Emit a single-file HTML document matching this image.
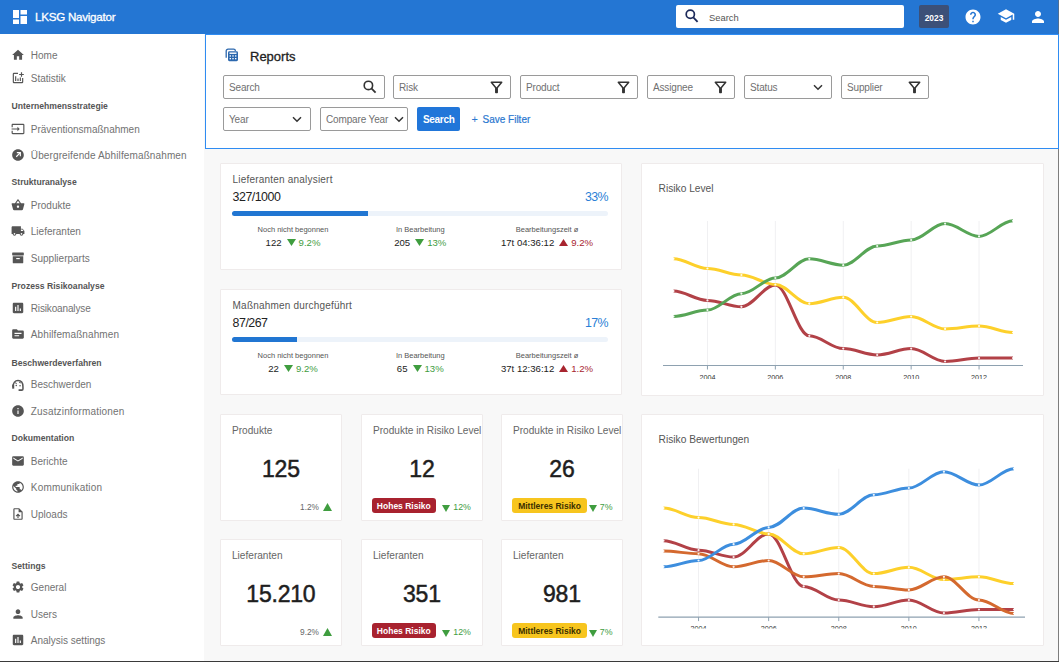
<!DOCTYPE html>
<html><head><meta charset="utf-8"><title>LKSG Navigator - Reports</title>
<style>
html,body{margin:0;padding:0;width:1059px;height:662px;overflow:hidden;background:#f8f8f8}
body{position:relative;font-family:"Liberation Sans", sans-serif}
.t{position:absolute;white-space:nowrap;line-height:1}
</style></head><body>
<div style="position:absolute;left:0px;top:0px;width:1059px;height:662px;background:#f8f8f8"></div><div style="position:absolute;left:0px;top:34px;width:204px;height:628px;background:#ffffff"></div><div style="position:absolute;left:0px;top:0px;width:1059px;height:34px;background:#2476d3"></div><div style="position:absolute;left:1058px;top:149px;width:1px;height:513px;background:#7d7d7d"></div><div style="position:absolute;left:1058px;top:0px;width:1px;height:34px;background:#4f6f94"></div><div style="position:absolute;left:0px;top:661px;width:1059px;height:1px;background:#3a3a3a"></div><svg style="position:absolute;left:13px;top:10px" width="14" height="14" viewBox="0 0 14 14"><rect x="0" y="0" width="6" height="8" fill="#fff"/><rect x="7.5" y="0" width="6.5" height="4.5" fill="#fff"/><rect x="0" y="9.5" width="6" height="4.5" fill="#fff"/><rect x="7.5" y="6" width="6.5" height="8" fill="#fff"/></svg><div class="t" style="left:35px;top:11.18px;font-size:11.6px;color:#ffffff;font-weight:400;letter-spacing:-0.25px;-webkit-text-stroke:0.3px #fff">LKSG Navigator</div><div style="position:absolute;left:676px;top:5px;width:228px;height:23px;background:#fff;border-radius:2px"></div><svg style="position:absolute;left:685px;top:9px" width="14" height="14" viewBox="0 0 14 14"><circle cx="5.3" cy="5.3" r="4.1" fill="none" stroke="#1c2a5a" stroke-width="1.7"/><line x1="8.3" y1="8.3" x2="12.6" y2="12.8" stroke="#1c2a5a" stroke-width="1.8"/></svg><div class="t" style="left:709px;top:12.64px;font-size:9.4px;color:#555;font-weight:400;">Search</div><div style="position:absolute;left:919px;top:5px;width:30px;height:23px;background:#3c5078;border-radius:2px"></div><div class="t" style="left:784px;width:300px;text-align:center;top:14.09px;font-size:8.4px;color:#ffffff;font-weight:700;">2023</div><svg style="position:absolute;left:964px;top:7.8px" width="18" height="18" viewBox="0 0 24 24"><path fill="#fff" d="M12 2C6.48 2 2 6.48 2 12s4.48 10 10 10 10-4.48 10-10S17.52 2 12 2zm1 17h-2v-2h2v2zm2.07-7.75l-.9.92C13.45 12.9 13 13.5 13 15h-2v-.5c0-1.1.45-2.1 1.17-2.83l1.24-1.26c.37-.36.59-.86.59-1.41 0-1.1-.9-2-2-2s-2 .9-2 2H8c0-2.21 1.79-4 4-4s4 1.79 4 4c0 .88-.36 1.68-.93 2.25z"/></svg><svg style="position:absolute;left:996.5px;top:7px" width="18" height="18" viewBox="0 0 24 24"><path fill="#fff" d="M5 13.18v4L12 21l7-3.82v-4L12 17l-7-3.82zM12 3L1 9l11 6 9-4.91V17h2V9L12 3z"/></svg><svg style="position:absolute;left:1029px;top:8px" width="18" height="18" viewBox="0 0 24 24"><path fill="#fff" d="M12 12c2.21 0 4-1.79 4-4s-1.79-4-4-4-4 1.79-4 4 1.79 4 4 4zm0 2c-2.67 0-8 1.34-8 4v2h16v-2c0-2.66-5.33-4-8-4z"/></svg><div class="t" style="left:30.8px;top:51.03px;font-size:10px;color:#727272;font-weight:400;">Home</div><svg style="position:absolute;left:10.7px;top:48.0px" width="14" height="14" viewBox="0 0 24 24" fill="#555"><path d="M10 20v-6h4v6h5v-8h3L12 3 2 12h3v8z"/></svg><div class="t" style="left:30.8px;top:74.03px;font-size:10px;color:#727272;font-weight:400;">Statistik</div><svg style="position:absolute;left:10.7px;top:71.0px" width="14" height="14" viewBox="0 0 24 24" fill="#555"><path d="M19 19H5V5h7V3H5a2 2 0 00-2 2v14a2 2 0 002 2h14a2 2 0 002-2v-7h-2v7z" /><path d="M19 2h-2v3h-3v2h3v3h2V7h3V5h-3z"/><path d="M7 9h2v8H7zM11 13h2v4h-2zM15 11h2v6h-2z" transform="translate(0,0)"/></svg><div class="t" style="left:11.5px;top:102.48px;font-size:8.65px;color:#555;font-weight:700;">Unternehmensstrategie</div><div class="t" style="left:30.8px;top:124.53px;font-size:10px;color:#727272;font-weight:400;">Präventionsmaßnahmen</div><svg style="position:absolute;left:10.7px;top:121.5px" width="14" height="14" viewBox="0 0 24 24" fill="#555"><path d="M21 3.01H3c-1.1 0-2 .9-2 2V9h2V4.99h18v14.03H3V15H1v4.01c0 1.1.9 1.98 2 1.98h18c1.1 0 2-.88 2-1.98v-14a2 2 0 00-2-2zM11 16l4-4-4-4v3H1v2h10v3z"/></svg><div class="t" style="left:30.8px;top:151.03px;font-size:10px;color:#727272;font-weight:400;letter-spacing:0.12px">Übergreifende Abhilfemaßnahmen</div><svg style="position:absolute;left:10.7px;top:148.0px" width="14" height="14" viewBox="0 0 24 24" fill="#555"><path d="M12 2C6.48 2 2 6.48 2 12s4.48 10 10 10 10-4.48 10-10S17.52 2 12 2zm2.5 5H17v7h-2v-3.6l-5.3 5.3-1.4-1.4L13.6 9H10V7z"/></svg><div class="t" style="left:11.5px;top:178.48px;font-size:8.65px;color:#555;font-weight:700;">Strukturanalyse</div><div class="t" style="left:30.8px;top:201.23px;font-size:10px;color:#727272;font-weight:400;">Produkte</div><svg style="position:absolute;left:10.7px;top:198.2px" width="14" height="14" viewBox="0 0 24 24" fill="#555"><path d="M17.21 9l-4.38-6.56a.993.993 0 00-.83-.42c-.32 0-.64.14-.83.43L6.79 9H2c-.55 0-1 .45-1 1 0 .09.01.18.04.27l2.54 9.27c.23.84 1 1.46 1.92 1.46h13c.92 0 1.69-.62 1.93-1.46l2.54-9.27L23 10c0-.55-.45-1-1-1h-4.79zM9 9l3-4.4L15 9H9zm3 8c-1.1 0-2-.9-2-2s.9-2 2-2 2 .9 2 2-.9 2-2 2z"/></svg><div class="t" style="left:30.8px;top:227.34px;font-size:10px;color:#727272;font-weight:400;">Lieferanten</div><svg style="position:absolute;left:10.7px;top:224.3px" width="14" height="14" viewBox="0 0 24 24" fill="#555"><path d="M20 8h-3V4H3c-1.1 0-2 .9-2 2v11h2c0 1.66 1.34 3 3 3s3-1.34 3-3h6c0 1.66 1.34 3 3 3s3-1.34 3-3h2v-5l-3-4zM6 18.5c-.83 0-1.5-.67-1.5-1.5s.67-1.5 1.5-1.5 1.5.67 1.5 1.5-.67 1.5-1.5 1.5zm13.5-9l1.96 2.5H17V9.5h2.5zm-1.5 9c-.83 0-1.5-.67-1.5-1.5s.67-1.5 1.5-1.5 1.5.67 1.5 1.5-.67 1.5-1.5 1.5z"/></svg><div class="t" style="left:30.8px;top:253.53px;font-size:10px;color:#727272;font-weight:400;">Supplierparts</div><svg style="position:absolute;left:10.7px;top:250.5px" width="14" height="14" viewBox="0 0 24 24" fill="#555"><rect x="2" y="2.5" width="20" height="5" rx="1"/><path d="M3 9h18v10.5a1.5 1.5 0 0 1-1.5 1.5h-15A1.5 1.5 0 0 1 3 19.5z"/><rect x="9" y="12" width="6" height="2" fill="#fff"/></svg><div class="t" style="left:11.5px;top:281.78px;font-size:8.65px;color:#555;font-weight:700;">Prozess Risikoanalyse</div><div class="t" style="left:30.8px;top:304.24px;font-size:10px;color:#727272;font-weight:400;letter-spacing:-0.15px">Risikoanalyse</div><svg style="position:absolute;left:10.7px;top:301.2px" width="14" height="14" viewBox="0 0 24 24" fill="#555"><path d="M19 3H5c-1.1 0-2 .9-2 2v14c0 1.1.9 2 2 2h14c1.1 0 2-.9 2-2V5c0-1.1-.9-2-2-2zM9 17H7v-7h2v7zm4 0h-2V7h2v10zm4 0h-2v-4h2v4z"/></svg><div class="t" style="left:30.8px;top:330.14px;font-size:10px;color:#727272;font-weight:400;letter-spacing:0.1px">Abhilfemaßnahmen</div><svg style="position:absolute;left:10.7px;top:327.1px" width="14" height="14" viewBox="0 0 24 24" fill="#555"><path d="M20 6h-8l-2-2H4c-1.1 0-1.99.9-1.99 2L2 18c0 1.1.9 2 2 2h16c1.1 0 2-.9 2-2V8c0-1.1-.9-2-2-2zm-2 6H6v-2h12v2zm-4 4H6v-2h8v2z"/></svg><div class="t" style="left:11.5px;top:358.58px;font-size:8.65px;color:#555;font-weight:700;">Beschwerdeverfahren</div><div class="t" style="left:30.8px;top:380.24px;font-size:10px;color:#727272;font-weight:400;">Beschwerden</div><svg style="position:absolute;left:10.7px;top:377.2px" width="14" height="14" viewBox="0 0 24 24" fill="#555"><path fill="none" stroke="#555" stroke-width="2.6" d="M3.5 17C3.5 10 7 5.8 12 5.8S20.5 10 20.5 16.5v4a2 2 0 0 1-2 2H13"/><rect x="2" y="13" width="3.5" height="7" fill="#555"/><circle cx="9" cy="14.5" r="1.3" fill="#555"/><circle cx="15.5" cy="15" r="1.3" fill="#555"/><path fill="none" stroke="#555" stroke-width="1.8" d="M7.5 9.5l2 2.5M14 8.5l2.5 2"/></svg><div class="t" style="left:30.8px;top:406.64px;font-size:10px;color:#727272;font-weight:400;letter-spacing:0.16px">Zusatzinformationen</div><svg style="position:absolute;left:10.7px;top:403.6px" width="14" height="14" viewBox="0 0 24 24" fill="#555"><path d="M12 2C6.48 2 2 6.48 2 12s4.48 10 10 10 10-4.48 10-10S17.52 2 12 2zm1 15h-2v-6h2v6zm0-8h-2V7h2v2z"/></svg><div class="t" style="left:11.5px;top:434.48px;font-size:8.65px;color:#555;font-weight:700;">Dokumentation</div><div class="t" style="left:30.8px;top:457.14px;font-size:10px;color:#727272;font-weight:400;">Berichte</div><svg style="position:absolute;left:10.7px;top:454.1px" width="14" height="14" viewBox="0 0 24 24" fill="#555"><path d="M20 4H4c-1.1 0-1.99.9-1.99 2L2 18c0 1.1.9 2 2 2h16c1.1 0 2-.9 2-2V6c0-1.1-.9-2-2-2zm0 4l-8 5-8-5V6l8 5 8-5v2z"/></svg><div class="t" style="left:30.8px;top:483.24px;font-size:10px;color:#727272;font-weight:400;letter-spacing:0.2px">Kommunikation</div><svg style="position:absolute;left:10.7px;top:480.2px" width="14" height="14" viewBox="0 0 24 24" fill="#555"><path d="M12 2C6.48 2 2 6.48 2 12s4.48 10 10 10 10-4.48 10-10S17.52 2 12 2zm-1 17.93c-3.95-.49-7-3.85-7-7.93 0-.62.08-1.21.21-1.79L9 15v1c0 1.1.9 2 2 2v1.93zm6.9-2.54c-.26-.81-1-1.39-1.9-1.39h-1v-3c0-.55-.45-1-1-1H8v-2h2c.55 0 1-.45 1-1V7h2c1.1 0 2-.9 2-2v-.41c2.93 1.19 5 4.06 5 7.41 0 2.08-.8 3.97-2.1 5.39z"/></svg><div class="t" style="left:30.8px;top:509.74px;font-size:10px;color:#727272;font-weight:400;">Uploads</div><svg style="position:absolute;left:10.7px;top:506.7px" width="14" height="14" viewBox="0 0 24 24" fill="#555"><path d="M14 2H6c-1.1 0-1.99.9-1.99 2L4 20c0 1.1.89 2 1.99 2H18c1.1 0 2-.9 2-2V8l-6-6zm4 18H6V4h7v5h5v11zM8 15.01l1.41 1.41L11 14.84V19h2v-4.16l1.59 1.59L16 15.01 12.01 11z"/></svg><div class="t" style="left:11.5px;top:561.68px;font-size:8.65px;color:#555;font-weight:700;">Settings</div><div class="t" style="left:30.8px;top:583.13px;font-size:10px;color:#727272;font-weight:400;">General</div><svg style="position:absolute;left:10.7px;top:580.1px" width="14" height="14" viewBox="0 0 24 24" fill="#555"><path d="M19.14 12.94c.04-.3.06-.61.06-.94 0-.32-.02-.64-.07-.94l2.03-1.58a.49.49 0 00.12-.61l-1.92-3.32a.488.488 0 00-.59-.22l-2.39.96c-.5-.38-1.03-.7-1.62-.94l-.36-2.54a.484.484 0 00-.48-.41h-3.84c-.24 0-.43.17-.47.41l-.36 2.54c-.59.24-1.13.57-1.62.94l-2.39-.96c-.22-.08-.47 0-.59.22L2.74 8.87c-.12.21-.08.47.12.61l2.03 1.58c-.05.3-.09.63-.09.94s.02.64.07.94l-2.03 1.58a.49.49 0 00-.12.61l1.92 3.32c.12.22.37.29.59.22l2.39-.96c.5.38 1.03.7 1.62.94l.36 2.54c.05.24.24.41.48.41h3.84c.24 0 .44-.17.47-.41l.36-2.54c.59-.24 1.13-.56 1.62-.94l2.39.96c.22.08.47 0 .59-.22l1.92-3.32c.12-.22.07-.47-.12-.61l-2.01-1.58zM12 15.6c-1.98 0-3.6-1.62-3.6-3.6s1.62-3.6 3.6-3.6 3.6 1.62 3.6 3.6-1.62 3.6-3.6 3.6z"/></svg><div class="t" style="left:30.8px;top:609.83px;font-size:10px;color:#727272;font-weight:400;">Users</div><svg style="position:absolute;left:10.7px;top:606.8px" width="14" height="14" viewBox="0 0 24 24" fill="#555"><path d="M12 12c2.21 0 4-1.79 4-4s-1.79-4-4-4-4 1.79-4 4 1.79 4 4 4zm0 2c-2.67 0-8 1.34-8 4v2h16v-2c0-2.66-5.33-4-8-4z"/></svg><div class="t" style="left:30.8px;top:636.24px;font-size:10px;color:#727272;font-weight:400;">Analysis settings</div><svg style="position:absolute;left:10.7px;top:633.2px" width="14" height="14" viewBox="0 0 24 24" fill="#555"><path d="M19 3H5c-1.1 0-2 .9-2 2v14c0 1.1.9 2 2 2h14c1.1 0 2-.9 2-2V5c0-1.1-.9-2-2-2zM9 17H7v-7h2v7zm4 0h-2V7h2v10zm4 0h-2v-4h2v4z"/></svg><div style="position:absolute;left:205px;top:34px;width:853px;height:114px;box-sizing:border-box;border:1px solid #2f8cf2;background:#fff;width:854px;height:115px"></div><svg style="position:absolute;left:225px;top:48px" width="14" height="14" viewBox="0 0 14 14"><path d="M1.2 9.8V3A1.8 1.8 0 0 1 3 1.2h5.6A1.8 1.8 0 0 1 10.4 3" fill="none" stroke="#2c68ae" stroke-width="1.3"/><rect x="3" y="3.2" width="10" height="10" rx="1.4" fill="#2c68ae"/><rect x="4.5" y="4.5" width="7" height="1.4" fill="#fff"/><rect x="4.6" y="7.3" width="1.4" height="1.3" fill="#fff"/><rect x="7.3" y="7.3" width="1.4" height="1.3" fill="#fff"/><rect x="10" y="7.3" width="1.4" height="1.3" fill="#fff"/><rect x="4.6" y="10" width="1.4" height="1.3" fill="#fff"/><rect x="7.3" y="10" width="1.4" height="1.3" fill="#fff"/><rect x="10" y="10" width="1.4" height="1.3" fill="#fff"/></svg><div class="t" style="left:250px;top:49.60px;font-size:13px;color:#222;font-weight:400;-webkit-text-stroke:0.3px #222">Reports</div><div style="position:absolute;left:223px;top:75px;width:162px;height:24px;box-sizing:border-box;border:1px solid #9a9a9a;border-radius:2px;background:#fff"></div><div class="t" style="left:229px;top:82.63px;font-size:10px;color:#707070;font-weight:400;letter-spacing:-0.15px">Search</div><svg style="position:absolute;left:363px;top:80px" width="14" height="14" viewBox="0 0 14 14"><circle cx="5.4" cy="5.4" r="4.2" fill="none" stroke="#333" stroke-width="1.6"/><line x1="8.4" y1="8.4" x2="12.6" y2="12.6" stroke="#333" stroke-width="1.8"/></svg><div style="position:absolute;left:393px;top:75px;width:118px;height:24px;box-sizing:border-box;border:1px solid #9a9a9a;border-radius:2px;background:#fff"></div><div class="t" style="left:399px;top:82.63px;font-size:10px;color:#707070;font-weight:400;letter-spacing:-0.15px">Risk</div><svg style="position:absolute;left:489.5px;top:80.5px" width="13" height="13" viewBox="0 0 13 13"><path d="M1.3 1.3h10.4L7.2 6.8v4.6H5.8V6.8z" fill="none" stroke="#333" stroke-width="1.5" stroke-linejoin="round"/></svg><div style="position:absolute;left:520px;top:75px;width:118px;height:24px;box-sizing:border-box;border:1px solid #9a9a9a;border-radius:2px;background:#fff"></div><div class="t" style="left:526px;top:82.63px;font-size:10px;color:#707070;font-weight:400;letter-spacing:-0.15px">Product</div><svg style="position:absolute;left:616.5px;top:80.5px" width="13" height="13" viewBox="0 0 13 13"><path d="M1.3 1.3h10.4L7.2 6.8v4.6H5.8V6.8z" fill="none" stroke="#333" stroke-width="1.5" stroke-linejoin="round"/></svg><div style="position:absolute;left:647px;top:75px;width:88px;height:24px;box-sizing:border-box;border:1px solid #9a9a9a;border-radius:2px;background:#fff"></div><div class="t" style="left:653px;top:82.63px;font-size:10px;color:#707070;font-weight:400;letter-spacing:-0.15px">Assignee</div><svg style="position:absolute;left:713.5px;top:80.5px" width="13" height="13" viewBox="0 0 13 13"><path d="M1.3 1.3h10.4L7.2 6.8v4.6H5.8V6.8z" fill="none" stroke="#333" stroke-width="1.5" stroke-linejoin="round"/></svg><div style="position:absolute;left:744px;top:75px;width:88px;height:24px;box-sizing:border-box;border:1px solid #9a9a9a;border-radius:2px;background:#fff"></div><div class="t" style="left:750px;top:82.63px;font-size:10px;color:#707070;font-weight:400;letter-spacing:-0.15px">Status</div><svg style="position:absolute;left:813px;top:83.5px" width="10" height="7" viewBox="0 0 10 7"><path d="M1 1.2l4 4 4-4" fill="none" stroke="#333" stroke-width="1.5"/></svg><div style="position:absolute;left:841px;top:75px;width:88px;height:24px;box-sizing:border-box;border:1px solid #9a9a9a;border-radius:2px;background:#fff"></div><div class="t" style="left:847px;top:82.63px;font-size:10px;color:#707070;font-weight:400;letter-spacing:-0.15px">Supplier</div><svg style="position:absolute;left:907.5px;top:80.5px" width="13" height="13" viewBox="0 0 13 13"><path d="M1.3 1.3h10.4L7.2 6.8v4.6H5.8V6.8z" fill="none" stroke="#333" stroke-width="1.5" stroke-linejoin="round"/></svg><div style="position:absolute;left:223px;top:107px;width:88px;height:24px;box-sizing:border-box;border:1px solid #9a9a9a;border-radius:2px;background:#fff"></div><div class="t" style="left:229px;top:114.63px;font-size:10px;color:#707070;font-weight:400;letter-spacing:-0.15px">Year</div><svg style="position:absolute;left:292px;top:115.5px" width="10" height="7" viewBox="0 0 10 7"><path d="M1 1.2l4 4 4-4" fill="none" stroke="#333" stroke-width="1.5"/></svg><div style="position:absolute;left:320px;top:107px;width:88px;height:24px;box-sizing:border-box;border:1px solid #9a9a9a;border-radius:2px;background:#fff"></div><div class="t" style="left:326px;top:114.63px;font-size:10px;color:#707070;font-weight:400;letter-spacing:-0.15px">Compare Year</div><svg style="position:absolute;left:393.8px;top:115.5px" width="10" height="7" viewBox="0 0 10 7"><path d="M1 1.2l4 4 4-4" fill="none" stroke="#333" stroke-width="1.5"/></svg><div style="position:absolute;left:417px;top:107px;width:43px;height:24px;background:#2176d9;border-radius:2px"></div><div class="t" style="left:288.7px;width:300px;text-align:center;top:115.44px;font-size:10px;color:#fff;font-weight:700;letter-spacing:-0.3px">Search</div><div class="t" style="left:471.5px;top:114.29px;font-size:11px;color:#2b78d0;font-weight:400;">+</div><div class="t" style="left:482.5px;top:115.13px;font-size:10px;color:#2b78d0;font-weight:400;-webkit-text-stroke:0.2px #2b78d0">Save Filter</div><div style="position:absolute;left:220px;top:163px;width:402px;height:107px;background:#fff;box-sizing:border-box;border:1px solid #efebeb;border-radius:1px"></div><div style="position:absolute;left:220px;top:289px;width:402px;height:106px;background:#fff;box-sizing:border-box;border:1px solid #efebeb;border-radius:1px"></div><div style="position:absolute;left:220px;top:414px;width:121.5px;height:106.5px;background:#fff;box-sizing:border-box;border:1px solid #efebeb;border-radius:1px"></div><div style="position:absolute;left:361px;top:414px;width:121.5px;height:106.5px;background:#fff;box-sizing:border-box;border:1px solid #efebeb;border-radius:1px"></div><div style="position:absolute;left:501px;top:414px;width:121.5px;height:106.5px;background:#fff;box-sizing:border-box;border:1px solid #efebeb;border-radius:1px"></div><div style="position:absolute;left:220px;top:539px;width:121.5px;height:106.5px;background:#fff;box-sizing:border-box;border:1px solid #efebeb;border-radius:1px"></div><div style="position:absolute;left:361px;top:539px;width:121.5px;height:106.5px;background:#fff;box-sizing:border-box;border:1px solid #efebeb;border-radius:1px"></div><div style="position:absolute;left:501px;top:539px;width:121.5px;height:106.5px;background:#fff;box-sizing:border-box;border:1px solid #efebeb;border-radius:1px"></div><div style="position:absolute;left:641px;top:163px;width:402.8px;height:233px;background:#fff;box-sizing:border-box;border:1px solid #efebeb;border-radius:1px"></div><div style="position:absolute;left:641px;top:414.3px;width:402.8px;height:232px;background:#fff;box-sizing:border-box;border:1px solid #efebeb;border-radius:1px"></div><div class="t" style="left:232.6px;top:175.13px;font-size:10px;color:#555;font-weight:400;letter-spacing:0.2px">Lieferanten analysiert</div><div class="t" style="left:232.6px;top:191.10px;font-size:12.4px;color:#222;font-weight:400;letter-spacing:-0.5px">327/1000</div><div class="t" style="left:308px;width:300px;text-align:right;top:191.10px;font-size:12.4px;color:#2a7fd6;font-weight:400;letter-spacing:-0.6px">33%</div><div style="position:absolute;left:232px;top:211px;width:375.5px;height:5px;background:#edf3fa;border-radius:3px"></div><div style="position:absolute;left:232px;top:211px;width:135.5px;height:5px;background:#2176d2;border-radius:3px 0 0 3px"></div><div class="t" style="left:143px;width:300px;text-align:center;top:225.85px;font-size:7.5px;color:#555;font-weight:400;">Noch nicht begonnen</div><div class="t" style="left:143px;width:300px;text-align:center;top:238.07px;font-size:9.6px;color:#222;font-weight:400;"><span style="color:#222">122</span><svg width="9" height="7" viewBox="0 0 9 7" style="vertical-align:0px;margin:0 3px 0 5px"><path d="M0 0h9L4.5 7z" fill="#3f9d3f"/></svg><span style="color:#3f9d3f">9.2%</span></div><div class="t" style="left:270.3px;width:300px;text-align:center;top:225.85px;font-size:7.5px;color:#555;font-weight:400;">In Bearbeitung</div><div class="t" style="left:270.3px;width:300px;text-align:center;top:238.07px;font-size:9.6px;color:#222;font-weight:400;"><span style="color:#222">205</span><svg width="9" height="7" viewBox="0 0 9 7" style="vertical-align:0px;margin:0 3px 0 5px"><path d="M0 0h9L4.5 7z" fill="#3f9d3f"/></svg><span style="color:#3f9d3f">13%</span></div><div class="t" style="left:397px;width:300px;text-align:center;top:225.85px;font-size:7.5px;color:#555;font-weight:400;">Bearbeitungszeit ø</div><div class="t" style="left:397px;width:300px;text-align:center;top:238.07px;font-size:9.6px;color:#222;font-weight:400;"><span style="color:#222">17t 04:36:12</span><svg width="9" height="7" viewBox="0 0 9 7" style="vertical-align:0px;margin:0 3px 0 5px"><path d="M0 7h9L4.5 0z" fill="#a8252f"/></svg><span style="color:#a8252f">9.2%</span></div><div class="t" style="left:232.6px;top:301.14px;font-size:10px;color:#555;font-weight:400;letter-spacing:0.2px">Maßnahmen durchgeführt</div><div class="t" style="left:232.6px;top:317.10px;font-size:12.4px;color:#222;font-weight:400;letter-spacing:-0.5px">87/267</div><div class="t" style="left:308px;width:300px;text-align:right;top:317.10px;font-size:12.4px;color:#2a7fd6;font-weight:400;letter-spacing:-0.6px">17%</div><div style="position:absolute;left:232px;top:337px;width:375.5px;height:5px;background:#edf3fa;border-radius:3px"></div><div style="position:absolute;left:232px;top:337px;width:64.5px;height:5px;background:#2176d2;border-radius:3px 0 0 3px"></div><div class="t" style="left:143px;width:300px;text-align:center;top:351.85px;font-size:7.5px;color:#555;font-weight:400;">Noch nicht begonnen</div><div class="t" style="left:143px;width:300px;text-align:center;top:364.07px;font-size:9.6px;color:#222;font-weight:400;"><span style="color:#222">22</span><svg width="9" height="7" viewBox="0 0 9 7" style="vertical-align:0px;margin:0 3px 0 5px"><path d="M0 0h9L4.5 7z" fill="#3f9d3f"/></svg><span style="color:#3f9d3f">9.2%</span></div><div class="t" style="left:270.3px;width:300px;text-align:center;top:351.85px;font-size:7.5px;color:#555;font-weight:400;">In Bearbeitung</div><div class="t" style="left:270.3px;width:300px;text-align:center;top:364.07px;font-size:9.6px;color:#222;font-weight:400;"><span style="color:#222">65</span><svg width="9" height="7" viewBox="0 0 9 7" style="vertical-align:0px;margin:0 3px 0 5px"><path d="M0 0h9L4.5 7z" fill="#3f9d3f"/></svg><span style="color:#3f9d3f">13%</span></div><div class="t" style="left:397px;width:300px;text-align:center;top:351.85px;font-size:7.5px;color:#555;font-weight:400;">Bearbeitungszeit ø</div><div class="t" style="left:397px;width:300px;text-align:center;top:364.07px;font-size:9.6px;color:#222;font-weight:400;"><span style="color:#222">37t 12:36:12</span><svg width="9" height="7" viewBox="0 0 9 7" style="vertical-align:0px;margin:0 3px 0 5px"><path d="M0 7h9L4.5 0z" fill="#a8252f"/></svg><span style="color:#a8252f">1.2%</span></div><div style="position:absolute;left:220px;top:414px;width:121.5px;height:106px;overflow:hidden"><div class="t" style="left:12px;top:12.05px;font-size:10.1px;color:#666;font-weight:400;">Produkte</div></div><div class="t" style="left:130.89999999999998px;width:300px;text-align:center;top:457.63px;font-size:23px;color:#1e1e1e;font-weight:400;-webkit-text-stroke:0.5px #1e1e1e;letter-spacing:-0.2px">125</div><div class="t" style="left:19px;width:300px;text-align:right;top:502.97px;font-size:8.3px;color:#666;font-weight:400;">1.2%</div><svg style="position:absolute;left:322.5px;top:502.5px" width="9" height="8" viewBox="0 0 9 8"><path d="M0 8h9L4.5 0z" fill="#3f9d3f"/></svg><div style="position:absolute;left:361px;top:414px;width:121.5px;height:106px;overflow:hidden"><div class="t" style="left:12px;top:12.05px;font-size:10.1px;color:#666;font-weight:400;">Produkte in Risiko Level</div></div><div class="t" style="left:271.9px;width:300px;text-align:center;top:457.63px;font-size:23px;color:#1e1e1e;font-weight:400;-webkit-text-stroke:0.5px #1e1e1e;letter-spacing:-0.2px">12</div><div style="position:absolute;left:371.8px;top:498px;width:64px;height:15px;background:#a8222f;border-radius:3px"></div><div class="t" style="left:253.8px;width:300px;text-align:center;top:502.00px;font-size:8.5px;color:#fff;font-weight:700;">Hohes Risiko</div><svg style="position:absolute;left:442.3px;top:504.5px" width="8" height="7" viewBox="0 0 8 7"><path d="M0 0h8L4 7z" fill="#3f9d3f"/></svg><div class="t" style="left:453.3px;top:502.85px;font-size:8.8px;color:#3f9d3f;font-weight:400;">12%</div><div style="position:absolute;left:501px;top:414px;width:121.5px;height:106px;overflow:hidden"><div class="t" style="left:12px;top:12.05px;font-size:10.1px;color:#666;font-weight:400;">Produkte in Risiko Level</div></div><div class="t" style="left:411.9px;width:300px;text-align:center;top:457.63px;font-size:23px;color:#1e1e1e;font-weight:400;-webkit-text-stroke:0.5px #1e1e1e;letter-spacing:-0.2px">26</div><div style="position:absolute;left:511.8px;top:498px;width:75.5px;height:15px;background:#f7c51e;border-radius:3px"></div><div class="t" style="left:399.54999999999995px;width:300px;text-align:center;top:502.00px;font-size:8.5px;color:#3b2f00;font-weight:700;">Mittleres Risiko</div><svg style="position:absolute;left:588.8px;top:504.5px" width="8" height="7" viewBox="0 0 8 7"><path d="M0 0h8L4 7z" fill="#3f9d3f"/></svg><div class="t" style="left:599.8px;top:502.85px;font-size:8.8px;color:#3f9d3f;font-weight:400;">7%</div><div style="position:absolute;left:220px;top:539px;width:121.5px;height:106px;overflow:hidden"><div class="t" style="left:12px;top:12.05px;font-size:10.1px;color:#666;font-weight:400;">Lieferanten</div></div><div class="t" style="left:130.89999999999998px;width:300px;text-align:center;top:582.63px;font-size:23px;color:#1e1e1e;font-weight:400;-webkit-text-stroke:0.5px #1e1e1e;letter-spacing:-0.2px">15.210</div><div class="t" style="left:19px;width:300px;text-align:right;top:627.97px;font-size:8.3px;color:#666;font-weight:400;">9.2%</div><svg style="position:absolute;left:322.5px;top:627.5px" width="9" height="8" viewBox="0 0 9 8"><path d="M0 8h9L4.5 0z" fill="#3f9d3f"/></svg><div style="position:absolute;left:361px;top:539px;width:121.5px;height:106px;overflow:hidden"><div class="t" style="left:12px;top:12.05px;font-size:10.1px;color:#666;font-weight:400;">Lieferanten</div></div><div class="t" style="left:271.9px;width:300px;text-align:center;top:582.63px;font-size:23px;color:#1e1e1e;font-weight:400;-webkit-text-stroke:0.5px #1e1e1e;letter-spacing:-0.2px">351</div><div style="position:absolute;left:371.8px;top:623px;width:64px;height:15px;background:#a8222f;border-radius:3px"></div><div class="t" style="left:253.8px;width:300px;text-align:center;top:627.00px;font-size:8.5px;color:#fff;font-weight:700;">Hohes Risiko</div><svg style="position:absolute;left:442.3px;top:629.5px" width="8" height="7" viewBox="0 0 8 7"><path d="M0 0h8L4 7z" fill="#3f9d3f"/></svg><div class="t" style="left:453.3px;top:627.85px;font-size:8.8px;color:#3f9d3f;font-weight:400;">12%</div><div style="position:absolute;left:501px;top:539px;width:121.5px;height:106px;overflow:hidden"><div class="t" style="left:12px;top:12.05px;font-size:10.1px;color:#666;font-weight:400;">Lieferanten</div></div><div class="t" style="left:411.9px;width:300px;text-align:center;top:582.63px;font-size:23px;color:#1e1e1e;font-weight:400;-webkit-text-stroke:0.5px #1e1e1e;letter-spacing:-0.2px">981</div><div style="position:absolute;left:511.8px;top:623px;width:75.5px;height:15px;background:#f7c51e;border-radius:3px"></div><div class="t" style="left:399.54999999999995px;width:300px;text-align:center;top:627.00px;font-size:8.5px;color:#3b2f00;font-weight:700;">Mittleres Risiko</div><svg style="position:absolute;left:588.8px;top:629.5px" width="8" height="7" viewBox="0 0 8 7"><path d="M0 0h8L4 7z" fill="#3f9d3f"/></svg><div class="t" style="left:599.8px;top:627.85px;font-size:8.8px;color:#3f9d3f;font-weight:400;">7%</div><div class="t" style="left:658.6px;top:183.97px;font-size:10.2px;color:#555;font-weight:400;">Risiko Level</div><svg style="position:absolute;left:0;top:0" width="1059" height="662" viewBox="0 0 1059 662"><defs><clipPath id="c163"><rect x="641" y="163" width="402" height="216"/></clipPath></defs><g clip-path="url(#c163)"><line x1="707.45" y1="221" x2="707.45" y2="365.5" stroke="#f0f0f2" stroke-width="1"/><line x1="707.45" y1="365.5" x2="707.45" y2="369.5" stroke="#8ea1b0" stroke-width="1"/><text x="707.45" y="379.5" font-family="Liberation Sans" font-size="7.2" fill="#333" text-anchor="middle">2004</text><line x1="775.35" y1="221" x2="775.35" y2="365.5" stroke="#f0f0f2" stroke-width="1"/><line x1="775.35" y1="365.5" x2="775.35" y2="369.5" stroke="#8ea1b0" stroke-width="1"/><text x="775.35" y="379.5" font-family="Liberation Sans" font-size="7.2" fill="#333" text-anchor="middle">2006</text><line x1="843.25" y1="221" x2="843.25" y2="365.5" stroke="#f0f0f2" stroke-width="1"/><line x1="843.25" y1="365.5" x2="843.25" y2="369.5" stroke="#8ea1b0" stroke-width="1"/><text x="843.25" y="379.5" font-family="Liberation Sans" font-size="7.2" fill="#333" text-anchor="middle">2008</text><line x1="911.1500000000001" y1="221" x2="911.1500000000001" y2="365.5" stroke="#f0f0f2" stroke-width="1"/><line x1="911.1500000000001" y1="365.5" x2="911.1500000000001" y2="369.5" stroke="#8ea1b0" stroke-width="1"/><text x="911.1500000000001" y="379.5" font-family="Liberation Sans" font-size="7.2" fill="#333" text-anchor="middle">2010</text><line x1="979.05" y1="221" x2="979.05" y2="365.5" stroke="#f0f0f2" stroke-width="1"/><line x1="979.05" y1="365.5" x2="979.05" y2="369.5" stroke="#8ea1b0" stroke-width="1"/><text x="979.05" y="379.5" font-family="Liberation Sans" font-size="7.2" fill="#333" text-anchor="middle">2012</text><line x1="663" y1="365.5" x2="1023" y2="365.5" stroke="#8ea1b0" stroke-width="1.2"/><path d="M673.50,291.10C685.38,291.10 695.57,300.40 707.45,300.40C719.33,300.40 729.52,306.80 741.40,306.80C753.28,306.80 763.47,285.00 775.35,285.00C787.23,285.00 797.42,335.80 809.30,335.80C821.18,335.80 831.37,348.60 843.25,348.60C855.13,348.60 865.32,355.00 877.20,355.00C889.08,355.00 899.27,348.60 911.15,348.60C923.03,348.60 933.22,361.50 945.10,361.50C956.98,361.50 967.17,358.10 979.05,358.10C990.93,358.10 1001.12,358.10 1013.00,358.10" fill="none" stroke="#b24147" stroke-width="3" stroke-linecap="butt"/><circle cx="673.50" cy="291.10" r="1.1" fill="#fff" opacity="0.9"/><circle cx="707.45" cy="300.40" r="1.1" fill="#fff" opacity="0.9"/><circle cx="741.40" cy="306.80" r="1.1" fill="#fff" opacity="0.9"/><circle cx="775.35" cy="285.00" r="1.1" fill="#fff" opacity="0.9"/><circle cx="809.30" cy="335.80" r="1.1" fill="#fff" opacity="0.9"/><circle cx="843.25" cy="348.60" r="1.1" fill="#fff" opacity="0.9"/><circle cx="877.20" cy="355.00" r="1.1" fill="#fff" opacity="0.9"/><circle cx="911.15" cy="348.60" r="1.1" fill="#fff" opacity="0.9"/><circle cx="945.10" cy="361.50" r="1.1" fill="#fff" opacity="0.9"/><circle cx="979.05" cy="358.10" r="1.1" fill="#fff" opacity="0.9"/><circle cx="1013.00" cy="358.10" r="1.1" fill="#fff" opacity="0.9"/><path d="M673.50,258.80C685.38,258.80 695.57,268.50 707.45,268.50C719.33,268.50 729.52,275.00 741.40,275.00C753.28,275.00 763.47,284.50 775.35,284.50C787.23,284.50 797.42,303.70 809.30,303.70C821.18,303.70 831.37,297.30 843.25,297.30C855.13,297.30 865.32,322.50 877.20,322.50C889.08,322.50 899.27,316.50 911.15,316.50C923.03,316.50 933.22,328.90 945.10,328.90C956.98,328.90 967.17,326.00 979.05,326.00C990.93,326.00 1001.12,332.50 1013.00,332.50" fill="none" stroke="#fdd02b" stroke-width="3" stroke-linecap="butt"/><circle cx="673.50" cy="258.80" r="1.1" fill="#fff" opacity="0.9"/><circle cx="707.45" cy="268.50" r="1.1" fill="#fff" opacity="0.9"/><circle cx="741.40" cy="275.00" r="1.1" fill="#fff" opacity="0.9"/><circle cx="775.35" cy="284.50" r="1.1" fill="#fff" opacity="0.9"/><circle cx="809.30" cy="303.70" r="1.1" fill="#fff" opacity="0.9"/><circle cx="843.25" cy="297.30" r="1.1" fill="#fff" opacity="0.9"/><circle cx="877.20" cy="322.50" r="1.1" fill="#fff" opacity="0.9"/><circle cx="911.15" cy="316.50" r="1.1" fill="#fff" opacity="0.9"/><circle cx="945.10" cy="328.90" r="1.1" fill="#fff" opacity="0.9"/><circle cx="979.05" cy="326.00" r="1.1" fill="#fff" opacity="0.9"/><circle cx="1013.00" cy="332.50" r="1.1" fill="#fff" opacity="0.9"/><path d="M673.50,316.50C685.38,316.50 695.57,310.10 707.45,310.10C719.33,310.10 729.52,293.70 741.40,293.70C753.28,293.70 763.47,278.00 775.35,278.00C787.23,278.00 797.42,258.80 809.30,258.80C821.18,258.80 831.37,265.20 843.25,265.20C855.13,265.20 865.32,246.00 877.20,246.00C889.08,246.00 899.27,240.00 911.15,240.00C923.03,240.00 933.22,223.60 945.10,223.60C956.98,223.60 967.17,236.40 979.05,236.40C990.93,236.40 1001.12,220.80 1013.00,220.80" fill="none" stroke="#57a556" stroke-width="3" stroke-linecap="butt"/><circle cx="673.50" cy="316.50" r="1.1" fill="#fff" opacity="0.9"/><circle cx="707.45" cy="310.10" r="1.1" fill="#fff" opacity="0.9"/><circle cx="741.40" cy="293.70" r="1.1" fill="#fff" opacity="0.9"/><circle cx="775.35" cy="278.00" r="1.1" fill="#fff" opacity="0.9"/><circle cx="809.30" cy="258.80" r="1.1" fill="#fff" opacity="0.9"/><circle cx="843.25" cy="265.20" r="1.1" fill="#fff" opacity="0.9"/><circle cx="877.20" cy="246.00" r="1.1" fill="#fff" opacity="0.9"/><circle cx="911.15" cy="240.00" r="1.1" fill="#fff" opacity="0.9"/><circle cx="945.10" cy="223.60" r="1.1" fill="#fff" opacity="0.9"/><circle cx="979.05" cy="236.40" r="1.1" fill="#fff" opacity="0.9"/><circle cx="1013.00" cy="220.80" r="1.1" fill="#fff" opacity="0.9"/></g></svg><div class="t" style="left:658.6px;top:434.97px;font-size:10.2px;color:#555;font-weight:400;">Risiko Bewertungen</div><svg style="position:absolute;left:0;top:0" width="1059" height="662" viewBox="0 0 1059 662"><defs><clipPath id="c414"><rect x="641" y="414" width="402" height="214.39999999999998"/></clipPath></defs><g clip-path="url(#c414)"><line x1="698.55" y1="468.7" x2="698.55" y2="617.1" stroke="#f0f0f2" stroke-width="1"/><line x1="698.55" y1="617.1" x2="698.55" y2="621.1" stroke="#8ea1b0" stroke-width="1"/><text x="698.55" y="631.1" font-family="Liberation Sans" font-size="7.2" fill="#333" text-anchor="middle">2004</text><line x1="768.65" y1="468.7" x2="768.65" y2="617.1" stroke="#f0f0f2" stroke-width="1"/><line x1="768.65" y1="617.1" x2="768.65" y2="621.1" stroke="#8ea1b0" stroke-width="1"/><text x="768.65" y="631.1" font-family="Liberation Sans" font-size="7.2" fill="#333" text-anchor="middle">2006</text><line x1="838.75" y1="468.7" x2="838.75" y2="617.1" stroke="#f0f0f2" stroke-width="1"/><line x1="838.75" y1="617.1" x2="838.75" y2="621.1" stroke="#8ea1b0" stroke-width="1"/><text x="838.75" y="631.1" font-family="Liberation Sans" font-size="7.2" fill="#333" text-anchor="middle">2008</text><line x1="908.8499999999999" y1="468.7" x2="908.8499999999999" y2="617.1" stroke="#f0f0f2" stroke-width="1"/><line x1="908.8499999999999" y1="617.1" x2="908.8499999999999" y2="621.1" stroke="#8ea1b0" stroke-width="1"/><text x="908.8499999999999" y="631.1" font-family="Liberation Sans" font-size="7.2" fill="#333" text-anchor="middle">2010</text><line x1="978.95" y1="468.7" x2="978.95" y2="617.1" stroke="#f0f0f2" stroke-width="1"/><line x1="978.95" y1="617.1" x2="978.95" y2="621.1" stroke="#8ea1b0" stroke-width="1"/><text x="978.95" y="631.1" font-family="Liberation Sans" font-size="7.2" fill="#333" text-anchor="middle">2012</text><line x1="658.3" y1="617.1" x2="1025" y2="617.1" stroke="#8ea1b0" stroke-width="1.2"/><path d="M663.50,540.70C675.77,540.70 686.28,550.20 698.55,550.20C710.82,550.20 721.33,557.00 733.60,557.00C745.87,557.00 756.38,533.90 768.65,533.90C780.92,533.90 791.43,586.40 803.70,586.40C815.97,586.40 826.48,600.00 838.75,600.00C851.02,600.00 861.53,606.70 873.80,606.70C886.07,606.70 896.58,600.00 908.85,600.00C921.12,600.00 931.63,613.00 943.90,613.00C956.17,613.00 966.68,609.50 978.95,609.50C991.22,609.50 1001.73,609.50 1014.00,609.50" fill="none" stroke="#b24147" stroke-width="3" stroke-linecap="butt"/><circle cx="663.50" cy="540.70" r="1.1" fill="#fff" opacity="0.9"/><circle cx="698.55" cy="550.20" r="1.1" fill="#fff" opacity="0.9"/><circle cx="733.60" cy="557.00" r="1.1" fill="#fff" opacity="0.9"/><circle cx="768.65" cy="533.90" r="1.1" fill="#fff" opacity="0.9"/><circle cx="803.70" cy="586.40" r="1.1" fill="#fff" opacity="0.9"/><circle cx="838.75" cy="600.00" r="1.1" fill="#fff" opacity="0.9"/><circle cx="873.80" cy="606.70" r="1.1" fill="#fff" opacity="0.9"/><circle cx="908.85" cy="600.00" r="1.1" fill="#fff" opacity="0.9"/><circle cx="943.90" cy="613.00" r="1.1" fill="#fff" opacity="0.9"/><circle cx="978.95" cy="609.50" r="1.1" fill="#fff" opacity="0.9"/><circle cx="1014.00" cy="609.50" r="1.1" fill="#fff" opacity="0.9"/><path d="M663.50,508.10C675.77,508.10 686.28,517.60 698.55,517.60C710.82,517.60 721.33,524.40 733.60,524.40C745.87,524.40 756.38,533.90 768.65,533.90C780.92,533.90 791.43,553.75 803.70,553.75C815.97,553.75 826.48,547.50 838.75,547.50C851.02,547.50 861.53,573.60 873.80,573.60C886.07,573.60 896.58,567.30 908.85,567.30C921.12,567.30 931.63,579.60 943.90,579.60C956.17,579.60 966.68,576.80 978.95,576.80C991.22,576.80 1001.73,583.60 1014.00,583.60" fill="none" stroke="#fdd02b" stroke-width="3" stroke-linecap="butt"/><circle cx="663.50" cy="508.10" r="1.1" fill="#fff" opacity="0.9"/><circle cx="698.55" cy="517.60" r="1.1" fill="#fff" opacity="0.9"/><circle cx="733.60" cy="524.40" r="1.1" fill="#fff" opacity="0.9"/><circle cx="768.65" cy="533.90" r="1.1" fill="#fff" opacity="0.9"/><circle cx="803.70" cy="553.75" r="1.1" fill="#fff" opacity="0.9"/><circle cx="838.75" cy="547.50" r="1.1" fill="#fff" opacity="0.9"/><circle cx="873.80" cy="573.60" r="1.1" fill="#fff" opacity="0.9"/><circle cx="908.85" cy="567.30" r="1.1" fill="#fff" opacity="0.9"/><circle cx="943.90" cy="579.60" r="1.1" fill="#fff" opacity="0.9"/><circle cx="978.95" cy="576.80" r="1.1" fill="#fff" opacity="0.9"/><circle cx="1014.00" cy="583.60" r="1.1" fill="#fff" opacity="0.9"/><path d="M663.50,551.00C675.77,551.00 686.28,553.75 698.55,553.75C710.82,553.75 721.33,566.80 733.60,566.80C745.87,566.80 756.38,560.50 768.65,560.50C780.92,560.50 791.43,576.80 803.70,576.80C815.97,576.80 826.48,573.60 838.75,573.60C851.02,573.60 861.53,586.40 873.80,586.40C886.07,586.40 896.58,589.90 908.85,589.90C921.12,589.90 931.63,576.80 943.90,576.80C956.17,576.80 966.68,600.00 978.95,600.00C991.22,600.00 1001.73,613.50 1014.00,613.50" fill="none" stroke="#d4692f" stroke-width="3" stroke-linecap="butt"/><circle cx="663.50" cy="551.00" r="1.1" fill="#fff" opacity="0.9"/><circle cx="698.55" cy="553.75" r="1.1" fill="#fff" opacity="0.9"/><circle cx="733.60" cy="566.80" r="1.1" fill="#fff" opacity="0.9"/><circle cx="768.65" cy="560.50" r="1.1" fill="#fff" opacity="0.9"/><circle cx="803.70" cy="576.80" r="1.1" fill="#fff" opacity="0.9"/><circle cx="838.75" cy="573.60" r="1.1" fill="#fff" opacity="0.9"/><circle cx="873.80" cy="586.40" r="1.1" fill="#fff" opacity="0.9"/><circle cx="908.85" cy="589.90" r="1.1" fill="#fff" opacity="0.9"/><circle cx="943.90" cy="576.80" r="1.1" fill="#fff" opacity="0.9"/><circle cx="978.95" cy="600.00" r="1.1" fill="#fff" opacity="0.9"/><circle cx="1014.00" cy="613.50" r="1.1" fill="#fff" opacity="0.9"/><path d="M663.50,566.80C675.77,566.80 686.28,560.50 698.55,560.50C710.82,560.50 721.33,544.20 733.60,544.20C745.87,544.20 756.38,527.40 768.65,527.40C780.92,527.40 791.43,508.10 803.70,508.10C815.97,508.10 826.48,514.30 838.75,514.30C851.02,514.30 861.53,494.80 873.80,494.80C886.07,494.80 896.58,488.00 908.85,488.00C921.12,488.00 931.63,471.70 943.90,471.70C956.17,471.70 966.68,485.00 978.95,485.00C991.22,485.00 1001.73,468.70 1014.00,468.70" fill="none" stroke="#3d8ede" stroke-width="3" stroke-linecap="butt"/><circle cx="663.50" cy="566.80" r="1.1" fill="#fff" opacity="0.9"/><circle cx="698.55" cy="560.50" r="1.1" fill="#fff" opacity="0.9"/><circle cx="733.60" cy="544.20" r="1.1" fill="#fff" opacity="0.9"/><circle cx="768.65" cy="527.40" r="1.1" fill="#fff" opacity="0.9"/><circle cx="803.70" cy="508.10" r="1.1" fill="#fff" opacity="0.9"/><circle cx="838.75" cy="514.30" r="1.1" fill="#fff" opacity="0.9"/><circle cx="873.80" cy="494.80" r="1.1" fill="#fff" opacity="0.9"/><circle cx="908.85" cy="488.00" r="1.1" fill="#fff" opacity="0.9"/><circle cx="943.90" cy="471.70" r="1.1" fill="#fff" opacity="0.9"/><circle cx="978.95" cy="485.00" r="1.1" fill="#fff" opacity="0.9"/><circle cx="1014.00" cy="468.70" r="1.1" fill="#fff" opacity="0.9"/></g></svg>
</body></html>
